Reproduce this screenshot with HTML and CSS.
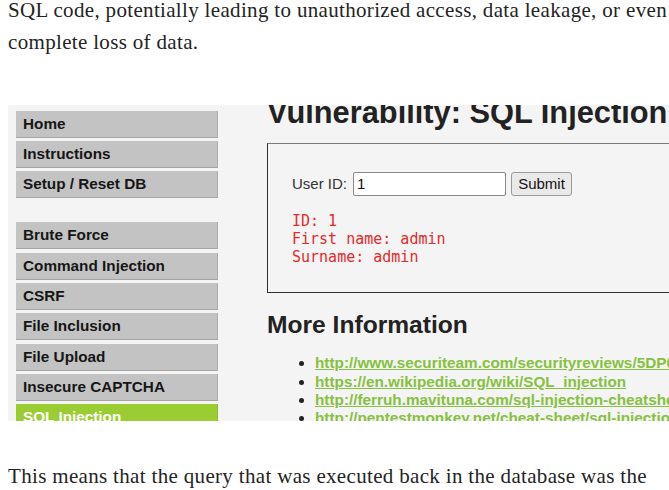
FILE: index.html
```html
<!DOCTYPE html>
<html lang="en">
<head>
<meta charset="utf-8">
<title>SQL Injection</title>
<link rel="stylesheet" href="styles.css">
</head>
<body>
<article class="article">
  <p class="para para-first">SQL code, potentially leading to unauthorized access, data leakage, or even<br>complete loss of data.</p>
  <figure class="shot">
    <nav class="menu">
      <ul class="menu-group">
        <li class="menu-item">Home</li>
        <li class="menu-item">Instructions</li>
        <li class="menu-item">Setup / Reset DB</li>
      </ul>
      <ul class="menu-group">
        <li class="menu-item">Brute Force</li>
        <li class="menu-item">Command Injection</li>
        <li class="menu-item">CSRF</li>
        <li class="menu-item">File Inclusion</li>
        <li class="menu-item">File Upload</li>
        <li class="menu-item">Insecure CAPTCHA</li>
        <li class="menu-item menu-item-active">SQL Injection</li>
      </ul>
    </nav>
    <div class="main">
      <h1 class="title">Vulnerability: SQL Injection</h1>
      <div class="box">
        <div class="form-row">
          <span class="label">User ID:</span>
          <span class="input">1</span>
          <span class="button">Submit</span>
        </div>
        <pre class="output">ID: 1
First name: admin
Surname: admin</pre>
      </div>
      <h2 class="subtitle">More Information</h2>
      <ul class="links">
        <li><a class="link">http://www.securiteam.com/securityreviews/5DP0N1P76E.html</a></li>
        <li><a class="link">https://en.wikipedia.org/wiki/SQL_injection</a></li>
        <li><a class="link">http://ferruh.mavituna.com/sql-injection-cheatsheet-oku/</a></li>
        <li><a class="link">http://pentestmonkey.net/cheat-sheet/sql-injection/mysql-sql-injection-cheat-sheet</a></li>
      </ul>
    </div>
  </figure>
  <p class="para para-last">This means that the query that was executed back in the database was the</p>
</article>
</body>
</html>
```

FILE: styles.css
```css
html, body {
  margin: 0;
  padding: 0;
  background: #ffffff;
  overflow: hidden;
}

.article {
  width: 1000px;
}

.para {
  margin: 0 0 0 8px;
  font-family: "Liberation Serif", "DejaVu Serif", serif;
  font-size: 21px;
  letter-spacing: 0.33px;
  line-height: 32px;
  color: #242424;
  white-space: nowrap;
}

.para-first {
  margin-top: -6.3px;
}

.para-last {
  margin-top: 39px;
}

.shot {
  margin: 47px 0 0 8px;
  height: 316px;
  width: 661px;
  overflow: hidden;
  background: #f4f4f4;
  display: flex;
  align-items: flex-start;
  font-family: "Liberation Sans", Arial, sans-serif;
}

.menu {
  flex: 0 0 202px;
  padding: 6px 0 0 8px;
}

.menu-group {
  list-style: none;
  margin: 0 0 24px;
  padding: 0;
}

.menu-item {
  box-sizing: border-box;
  height: 27px;
  margin-bottom: 3.33px;
  padding-left: 7px;
  background: #c3c3c3;
  border-bottom: 1px solid #a4a4a4;
  border-right: 1px solid #adadad;
  font-size: 15.3px;
  font-weight: bold;
  line-height: 26px;
  color: #161616;
  white-space: nowrap;
}

.menu-item-active {
  background: #9acd32;
  border-color: #8dbd2a;
  color: #ffffff;
}

.main {
  flex: 0 0 auto;
  padding-left: 49px;
  width: 600px;
}

.title {
  margin: -6.8px 0 0;
  font-size: 30.8px;
  line-height: 30px;
  font-weight: bold;
  color: #222222;
  white-space: nowrap;
}

.box {
  box-sizing: border-box;
  margin-top: 14.8px;
  height: 150px;
  width: 560px;
  padding: 28px 0 0 24px;
  border: 1px solid #2f2f2f;
  border-top-color: #7a7a7a;
}

.form-row {
  display: flex;
  align-items: center;
  height: 24px;
  font-size: 15px;
  color: #333333;
}

.label {
  margin-right: 6px;
}

.input {
  box-sizing: border-box;
  width: 153px;
  height: 24px;
  padding-left: 3px;
  background: #ffffff;
  border: 1px solid #8a8a8a;
  border-radius: 2px;
  line-height: 22px;
  color: #111111;
}

.button {
  box-sizing: border-box;
  margin-left: 5px;
  width: 61px;
  height: 24px;
  background: #e9e9e9;
  border: 1px solid #9a9a9a;
  border-radius: 3px;
  line-height: 22px;
  text-align: center;
  color: #111111;
}

.output {
  margin: 15.8px 0 0;
  font-family: "DejaVu Sans Mono", monospace;
  font-size: 15px;
  line-height: 18px;
  color: #e52a2a;
}

.subtitle {
  margin: 18px 0 0;
  font-size: 24.6px;
  line-height: 28px;
  font-weight: bold;
  color: #222222;
}

.links {
  margin: 15.5px 0 0;
  padding-left: 48px;
  font-size: 15.3px;
  line-height: 18.33px;
  font-weight: bold;
  color: #222222;
}

.link {
  color: #86c13f;
  text-decoration: underline;
  white-space: nowrap;
}
```
